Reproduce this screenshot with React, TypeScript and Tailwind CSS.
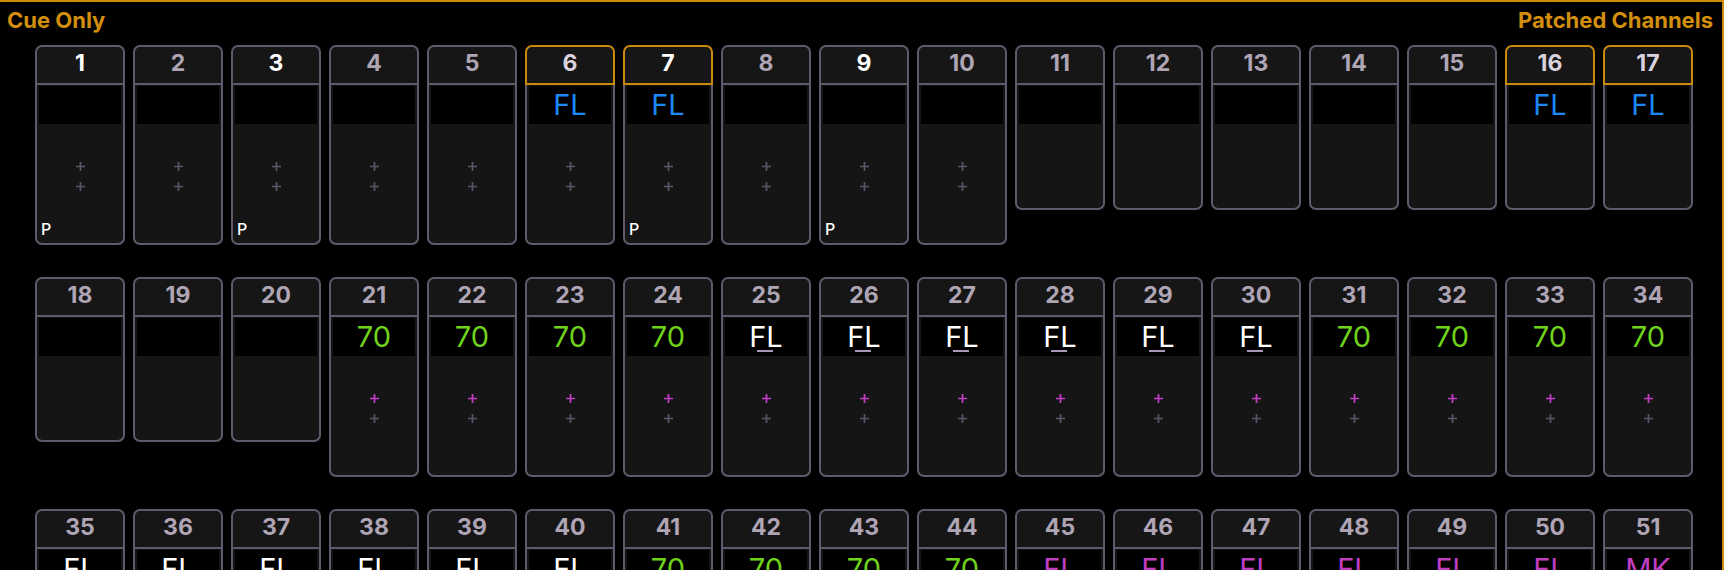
type Tone = 'blue' | 'green' | 'white' | 'magenta'
type NumTone = 'white' | 'light' | 'dim'

interface Channel {
  n: number
  value?: string
  tone?: Tone
  tall: boolean
  plus?: 'grey' | 'pink'
  park?: boolean
  selected?: boolean
  num: NumTone
}

const TONE_CLASS: Record<Tone, string> = {
  blue: 'text-[#1b88f5]',
  green: 'text-[#6fd21c]',
  white: 'text-white',
  magenta: 'text-[#c13ec3]',
}

const NUM_CLASS: Record<NumTone, string> = {
  white: 'text-white',
  light: 'text-[#d9d1dd]',
  dim: 'text-[#afa5b5]',
}

function range(a: number, b: number) {
  const out: number[] = []
  for (let i = a; i <= b; i++) out.push(i)
  return out
}

const rowOne: Channel[] = range(1, 17).map(n => {
  const fl = [6, 7, 16, 17].includes(n)
  return {
    n,
    value: fl ? 'FL' : undefined,
    tone: fl ? 'blue' : undefined,
    tall: n <= 10,
    plus: n <= 10 ? 'grey' : undefined,
    park: [1, 3, 7, 9].includes(n),
    selected: fl,
    num: [1, 3, 7, 9].includes(n) ? 'white' : fl ? 'light' : 'dim',
  } as Channel
})

const rowTwo: Channel[] = range(18, 34).map(n => {
  if (n <= 20) return { n, tall: false, num: 'dim' } as Channel
  const white = n >= 25 && n <= 30
  return {
    n,
    value: white ? 'FL' : '70',
    tone: white ? 'white' : 'green',
    tall: true,
    plus: 'pink',
    num: 'dim',
  } as Channel
})

const rowThree: Channel[] = range(35, 51).map(n => {
  let value = 'FL'
  let tone: Tone = 'white'
  if (n >= 41 && n <= 44) { value = '70'; tone = 'green' }
  else if (n >= 45 && n <= 50) tone = 'magenta'
  else if (n === 51) { value = 'MK'; tone = 'magenta' }
  return { n, value, tone, tall: true, plus: 'pink', num: 'dim' } as Channel
})

function Plus({ color }: { color: string }) {
  return (
    <svg width="11" height="11" viewBox="0 0 11 11" className="block">
      <path d="M5.5 1v9M1 5.5h9" stroke={color} strokeWidth="1.7" />
    </svg>
  )
}

function Tile({ ch }: { ch: Channel }) {
  const edge = ch.selected ? 'border-[#cc8a0d]' : 'border-[#5f596b]'
  return (
    <div className={`flex w-[90px] shrink-0 flex-col ${ch.tall ? 'h-[200px]' : 'h-[165px]'}`}>
      {/* channel number */}
      <div
        className={`flex h-[40px] items-center justify-center rounded-t-[7px] border-2 bg-[#161616] pb-[3px] text-[23px] font-bold leading-none ${edge} ${NUM_CLASS[ch.num]}`}
      >
        {ch.n}
      </div>

      <div className="flex flex-1 flex-col rounded-b-[7px] border-2 border-t-0 border-[#5f596b] bg-[#151515] px-[2px] pt-[1px]">
        {/* level / mark */}
        <div className="relative flex h-[38px] items-center justify-center bg-black pb-[1px]">
          {ch.value && (
            <span className={`text-[29px] leading-none ${TONE_CLASS[ch.tone!]}`}>{ch.value}</span>
          )}
          {ch.value && ch.tone === 'white' && (
            <div className="absolute bottom-[4px] left-1/2 ml-[-9px] h-[2px] w-[16px] bg-[#a898b9]" />
          )}
        </div>

        {ch.plus && (
          <div className="mt-[37px] flex flex-col items-center gap-[9px]">
            <Plus color={ch.plus === 'pink' ? '#c33ec5' : '#5b556a'} />
            <Plus color="#5b556a" />
          </div>
        )}

        {ch.park && (
          <div className="mt-auto pb-[6px] pl-[2px] text-[16px] font-medium leading-none text-white">P</div>
        )}
      </div>
    </div>
  )
}

export default function App() {
  return (
    <div className="h-[570px] w-[1724px] overflow-hidden border-t-2 border-r-2 border-[#cc8a0d] bg-black font-['Inter','Noto_Sans',sans-serif]">
      <div className="flex h-[43px] items-start justify-between pl-[7px] pr-[9px] pt-[5px] text-[22px] font-bold leading-[26px] text-[#d28f0f]">
        <span>Cue Only</span>
        <span>Patched Channels</span>
      </div>

      <div className="flex flex-col gap-[32px] pl-[35px]">
        {[rowOne, rowTwo, rowThree].map((row, i) => (
          <div key={i} className="flex items-start gap-[8px]">
            {row.map(ch => <Tile key={ch.n} ch={ch} />)}
          </div>
        ))}
      </div>
    </div>
  )
}
